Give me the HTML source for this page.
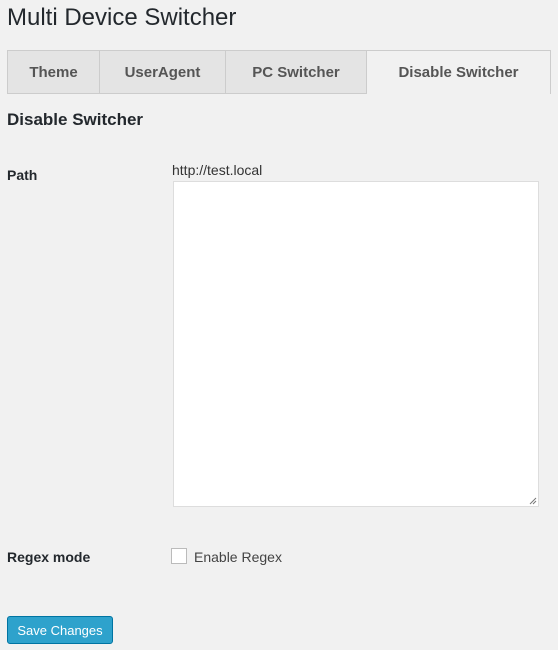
<!DOCTYPE html>
<html><head><style>
body{margin:0;background:#f1f1f1;width:558px;height:650px;position:relative;font-family:"Liberation Sans",sans-serif;color:#23282d;overflow:hidden}
.a{position:absolute}
h1{position:absolute;left:7px;top:3px;margin:0;font-size:24px;font-weight:400;line-height:30px}
.tab{position:absolute;top:50px;height:42px;border:1px solid #ccc;background:#e4e4e4;font-weight:bold;font-size:15px;color:#555;text-align:center;line-height:44px;box-sizing:content-box}
</style></head><body>
<h1>Multi Device Switcher</h1>
<div class="a" style="left:7px;top:93px;width:359px;height:1px;background:#ccc"></div>
<div class="tab" style="left:7px;width:91px">Theme</div>
<div class="tab" style="left:99px;width:125px">UserAgent</div>
<div class="tab" style="left:225px;width:140px">PC Switcher</div>
<div class="tab" style="left:366px;width:183px;background:#f1f1f1;border-bottom:none;height:43px">Disable Switcher</div>
<div class="a" style="left:7px;top:110px;font-size:17px;font-weight:bold">Disable Switcher</div>
<div class="a" style="left:7px;top:167px;font-size:14px;font-weight:bold">Path</div>
<div class="a" style="left:172px;top:162px;font-size:14px;color:#333">http://test.local</div>
<div class="a" style="left:173px;top:181px;width:364px;height:324px;background:#fff;border:1px solid #ddd"></div>
<svg class="a" style="left:529px;top:497px" width="8" height="8"><path d="M1 7L7 1M4 7L7 4" stroke="#777" stroke-width="1"/></svg>
<div class="a" style="left:7px;top:549px;font-size:14px;font-weight:bold">Regex mode</div>
<div class="a" style="left:171px;top:548px;width:14px;height:14px;background:#fff;border:1px solid #bbb"></div>
<div class="a" style="left:194px;top:549px;font-size:14px;color:#444">Enable Regex</div>
<div class="a" style="left:7px;top:616px;width:104px;height:26px;background:#2ea2cc;border:1px solid #0074a2;border-radius:3px;color:#fff;font-size:13px;text-align:center;line-height:28px">Save Changes</div>
</body></html>
